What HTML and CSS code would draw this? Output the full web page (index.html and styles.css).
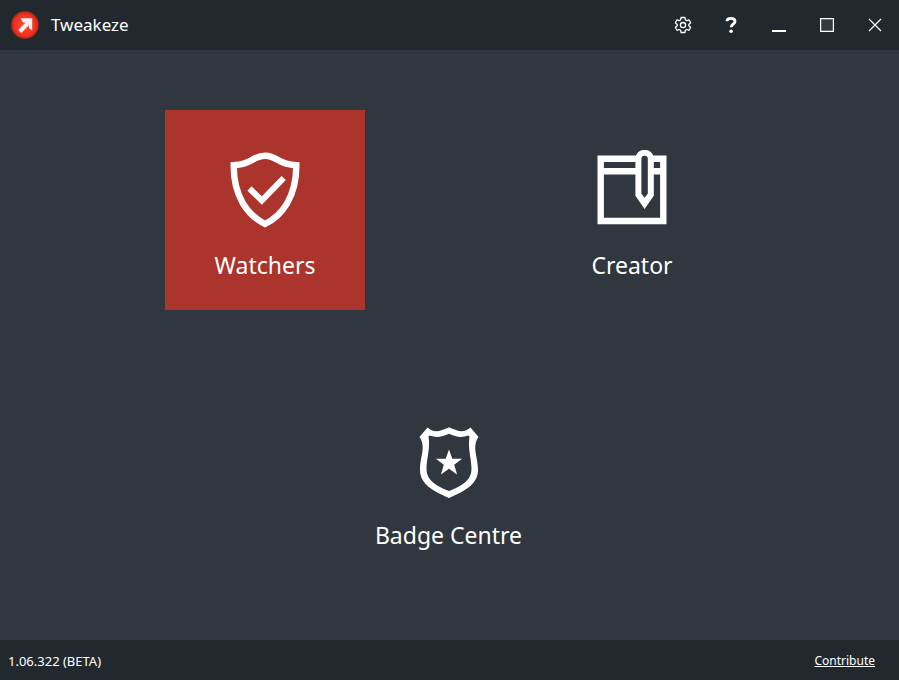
FILE: index.html
```html
<!DOCTYPE html>
<html lang="en">
<head>
<meta charset="utf-8">
<title>Tweakeze</title>
<link rel="stylesheet" href="styles.css">
</head>
<body>
<header class="titlebar">
  <svg class="logo" viewBox="0 0 28 28" aria-hidden="true">
    <defs>
      <radialGradient id="disc">
        <stop offset="0" stop-color="#fb4a38"/>
        <stop offset="0.75" stop-color="#f23320"/>
        <stop offset="1" stop-color="#bd2418"/>
      </radialGradient>
    </defs>
    <circle cx="14" cy="14" r="13.7" fill="url(#disc)"/>
    <path d="M9.500 7.300H21.200V19.500l-3.300-2.500v-2.700l-7.600 7.600-3-3 7.300-7.300h-2.600z" fill="#f6efee"/>
  </svg>
  <h1 class="title">Tweakeze</h1>
  <nav class="controls">
    <button class="control" aria-label="Settings">
      <svg viewBox="0 0 18 18" fill="none" stroke="#fff" stroke-width="1.3" stroke-linejoin="round">
        <path d="M7.100 1.500h3.800l.5 2.400 1.400.8 2.300-.8 1.500 3-1.800 1.500v1.400l1.800 1.500-1.500 3-2.300-.8-1.400.8-.5 2.200H7.100l-.5-2.200-1.400-.8-2.300.8-1.500-3 1.800-1.500V8.400L1.400 6.900l1.500-3 2.300.8 1.400-.8z"/>
        <circle cx="9" cy="9.100" r="2.600"/>
      </svg>
    </button>
    <button class="control" aria-label="Help">
      <svg viewBox="0 0 18 18" fill="none" stroke="#fff" stroke-width="2.800">
        <path d="M4.900 5.200C5 3.200 6.500 2.300 9 2.300s4 1.200 4 3.100c0 2.600-3.900 2.900-3.900 5.900"/>
        <circle cx="9.100" cy="15.300" r="1.800" fill="#fff" stroke="none"/>
      </svg>
    </button>
    <button class="control" aria-label="Minimize">
      <svg viewBox="0 0 18 18"><path d="M2 14h14v2H2z" fill="#fff"/></svg>
    </button>
    <button class="control" aria-label="Maximize">
      <svg viewBox="0 0 18 18"><path d="M2.600 2.600h12.800v12.800H2.600z" fill="#323c3c" stroke="#fff" stroke-width="1.200"/></svg>
    </button>
    <button class="control" aria-label="Close">
      <svg viewBox="0 0 18 18"><path d="M3 3l12 12M15 3L3 15" fill="none" stroke="#fff" stroke-width="1.200"/></svg>
    </button>
  </nav>
</header>

<main class="menu">
  <div class="row">
    <button class="tile tile-active">
      <svg class="icon" viewBox="0 0 80 80" fill="none" stroke="#fff" aria-hidden="true">
        <path d="M40 5.700C34.500 5.700 31 7.500 27 10c-4.500 2.800-9.500 4.700-18.300 5.200C8.500 47 23 65.500 40 74c17-8.500 31.500-27 31.300-58.800C62.500 14.700 57.500 12.800 53 10c-4-2.500-7.500-4.300-13-4.300z" stroke-width="6.400"/>
        <path d="M24.500 38.500l12.300 12L58.700 28" stroke-width="6"/>
      </svg>
      <span class="label">Watchers</span>
    </button>
    <button class="tile">
      <svg class="icon" viewBox="0 0 80 80" fill="none" stroke="#fff" aria-hidden="true">
        <path d="M8.700 8.700h62.600v62.300H8.700zM8.700 21.300h62.600" stroke-width="6.400"/>
        <path d="M43.400 8.500a9.200 8.700 0 0 1 18.400 0v37.200L52.600 59l-9.200-13.300z" fill="#fff" stroke="none"/>
        <path d="M49.400 9a3.200 3.200 0 0 1 6.400 0v34.500l-3.200 4.300-3.200-4.300z" fill="#30373f" stroke="none"/>
      </svg>
      <span class="label">Creator</span>
    </button>
  </div>
  <div class="row">
    <button class="tile">
      <svg class="icon" viewBox="0 0 80 80" aria-hidden="true">
        <path d="M18.500 7.500c4 3.800 9 4.500 14 2.700 2.800-1 5-1.700 7.500-3 2.500 1.300 4.700 2 7.500 3 5 1.800 10 1.100 14-2.700l8 9.500C62.500 27 69 36 69 50c0 14-13 21-29 28-16-7-29-14-29-28 0-14 6.500-23 -.5-33zM19.500 16.500C21.500 29 17.500 38 17.500 49c0 11 8.500 16.500 22.500 22 14-5.500 22.500-11 22.500-22 0-11-4-20-2-32.500l-1.200-.9c-6.300 2.200-12.300 1.600-19.300-1.800-7 3.400-13 4-19.300 1.800z" fill="#fff" fill-rule="evenodd"/>
        <path d="M40 29.500l3.300 9.300h9.800l-7.900 6 2.900 9.600-8.100-5.700-8.100 5.700 2.900-9.600-7.900-6h9.800z" fill="#fff"/>
      </svg>
      <span class="label">Badge Centre</span>
    </button>
  </div>
</main>

<footer class="statusbar">
  <span class="version">1.06.322 (BETA)</span>
  <a class="link" href="#contribute">Contribute</a>
</footer>
</body>
</html>
```
FILE: styles.css
```css
* {
  box-sizing: border-box;
}

body {
  display: flex;
  flex-direction: column;
  min-height: 100vh;
  margin: 0;
  background: #30373f;
  color: #fff;
  font-family: Tahoma, "Noto Sans", sans-serif;
}

button {
  padding: 0;
  border: 0;
  background: none;
  color: inherit;
  font-family: inherit;
}

.titlebar {
  display: flex;
  align-items: center;
  height: 50px;
  padding-left: 11px;
  background: #21292e;
}

.logo {
  width: 28px;
  height: 28px;
}

.title {
  margin: 0 0 0 12px;
  font-size: 17px;
  line-height: 24px;
  font-weight: 400;
}

.controls {
  display: flex;
  margin-left: auto;
}

.control {
  display: flex;
  align-items: center;
  justify-content: center;
  width: 48px;
  height: 50px;
}

.control svg {
  width: 18px;
  height: 18px;
}

.menu {
  display: flex;
  flex: 1;
  flex-direction: column;
  justify-content: space-between;
  gap: 24px;
  padding: 60px 2px 60px 0;
}

.row {
  display: flex;
  justify-content: center;
  gap: 167px;
}

.tile {
  display: flex;
  flex-direction: column;
  align-items: center;
  justify-content: center;
  gap: 19px;
  width: 200px;
  height: 200px;
  padding-top: 11px;
}

.tile-active {
  background: #ab342d;
}

.icon {
  width: 80px;
  height: 80px;
}

.label {
  font-size: 23px;
  line-height: 32px;
}

.statusbar {
  display: flex;
  align-items: center;
  justify-content: space-between;
  height: 40px;
  padding: 2px 24px 0 8px;
  background: #21292e;
  font-size: 12px;
  line-height: 16px;
}

.version {
  font-size: 13px;
}

.link {
  color: inherit;
}
```
